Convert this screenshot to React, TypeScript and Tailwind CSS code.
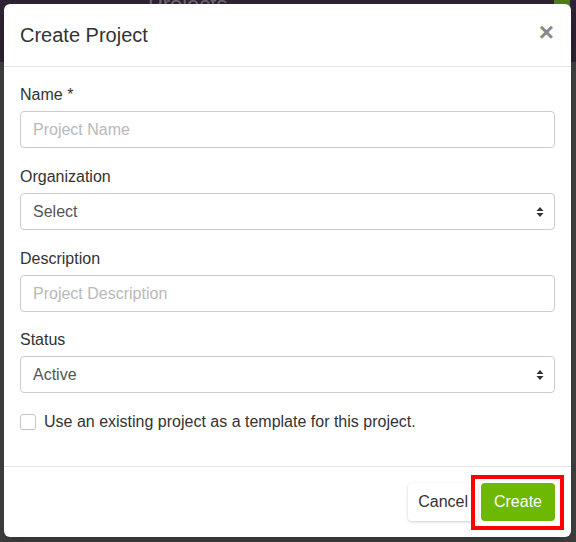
import React from 'react';

const SelectArrows: React.FC = () => (
    <svg width="8" height="12" viewBox="0 0 8 12" className="shrink-0">
        <path d="M4 1 L7.5 5 H0.5 Z" fill="#333" />
        <path d="M4 11 L7.5 7 H0.5 Z" fill="#333" />
    </svg>
);

const Label: React.FC<{ children: React.ReactNode }> = ({ children }) => (
    <label className="block text-[16px] leading-[20px] text-[#333] mb-[6px] pt-[1px]">{children}</label>
);

const TextField: React.FC<{ placeholder: string }> = ({ placeholder }) => (
    <div className="h-[37px] border border-[#ccc] rounded-[4px] px-3 flex items-center text-[16px] text-[#b9b9b9] bg-white">
        {placeholder}
    </div>
);

const SelectField: React.FC<{ value: string }> = ({ value }) => (
    <div className="h-[37px] border border-[#ccc] rounded-[4px] pl-3 pr-[10px] flex items-center justify-between text-[16px] text-[#555] bg-white">
        <span>{value}</span>
        <SelectArrows />
    </div>
);

export default function App() {
    return (
        <div
            className="relative w-[576px] h-[542px] overflow-hidden bg-[#3e3e3e]"
            style={{ fontFamily: '"Liberation Sans", Arial, sans-serif' }}
        >
            {/* page behind the backdrop */}
            <div className="h-[62px] bg-[#2c2231] flex items-start pl-[148px]">
                <span className="text-[22px] leading-[10px] text-[#6c6470]">Projects</span>
                <div className="ml-auto mr-[6px] w-[16px] h-[8px] bg-[#4f7d12]" />
            </div>

            {/* modal */}
            <div className="absolute left-[4px] top-[4px] w-[567px] h-[533px] bg-white rounded-[6px] flex flex-col shadow-xl">
                <div className="h-[63px] border-b border-[#e5e5e5] px-4 flex items-center justify-between">
                    <h4 className="text-[20px] text-[#333] leading-none">Create Project</h4>
                    <span className="text-[26px] font-bold text-[#888] leading-none mr-[1px] -mt-[6px]">×</span>
                </div>

                <div className="px-4 pt-[17px] flex-1">
                    <div className="mb-[18px]">
                        <Label>Name *</Label>
                        <TextField placeholder="Project Name" />
                    </div>
                    <div className="mb-[18px]">
                        <Label>Organization</Label>
                        <SelectField value="Select" />
                    </div>
                    <div className="mb-[17px]">
                        <Label>Description</Label>
                        <TextField placeholder="Project Description" />
                    </div>
                    <div className="mb-[19px]">
                        <Label>Status</Label>
                        <SelectField value="Active" />
                    </div>
                    <div className="flex items-center gap-[8px] h-[20px]">
                        <span className="w-[16px] h-[16px] border border-[#c4c4c4] rounded-[3px] bg-white" />
                        <span className="text-[16px] text-[#333]">Use an existing project as a template for this project.</span>
                    </div>
                </div>

                <div className="h-[71px] border-t border-[#e5e5e5] px-4 flex items-center justify-end">
                    <button className="h-[38px] px-[10px] rounded-[4px] bg-white text-[#333] text-[16px] shadow-[0_1px_3px_rgba(0,0,0,0.2)]">
                        Cancel
                    </button>
                    <button className="h-[38px] w-[74px] ml-[3px] rounded-[4px] bg-[#6cb803] text-white text-[16px]">
                        Create
                    </button>
                </div>
            </div>

            {/* highlight annotation */}
            <div className="absolute left-[471px] top-[475px] w-[93px] h-[55px] border-[4px] border-[#ff0000]" />
        </div>
    );
}
